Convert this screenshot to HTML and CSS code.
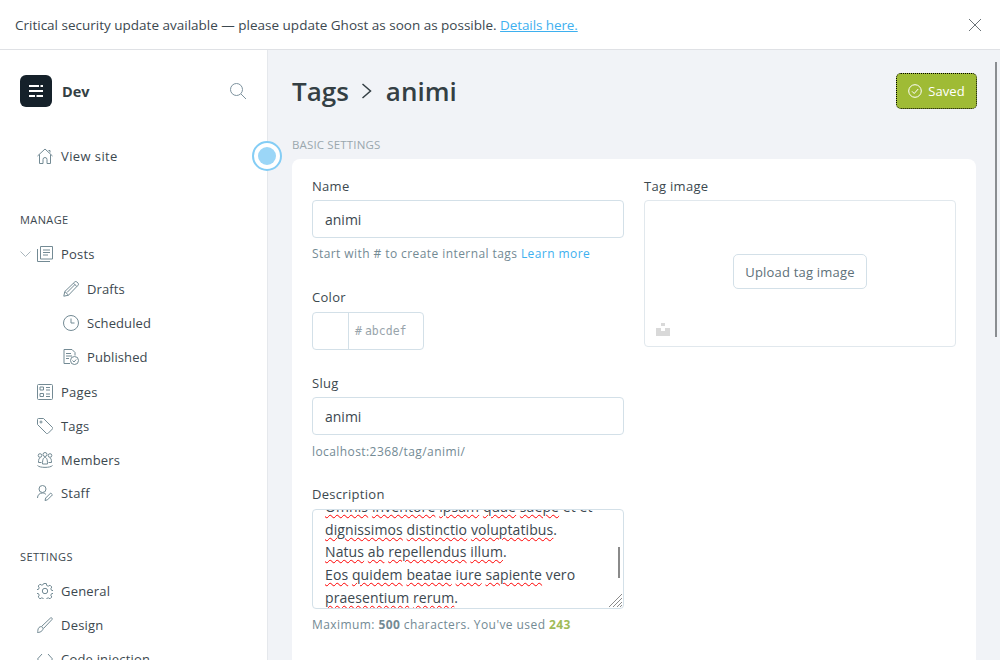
FILE: index.html
```html
<!DOCTYPE html>
<html lang="en">
<head>
<meta charset="UTF-8">
<meta name="viewport" content="width=device-width, initial-scale=1.0">
<title>Tags - animi - Dev</title>
<link rel="stylesheet" href="styles.css">
</head>
<body>

<!-- Update notice -->
<div class="notice">
  <p>Critical security update available — please update Ghost as soon as possible. <a href="#">Details here.</a></p>
  <svg class="notice-close" width="14" height="14" viewBox="0 0 14 14"><path d="M1 1l12 12M13 1L1 13"/></svg>
</div>

<div class="shell">

  <!-- Sidebar -->
  <nav class="sidebar">
    <div class="brand">
      <span class="brand-logo">
        <svg width="16" height="14" viewBox="0 0 16 14"><path d="M1 2h10M12.500 2H15M1 7h14M1 12h6M8.500 12H15"/></svg>
      </span>
      <span class="brand-name">Dev</span>
      <svg class="brand-search" width="18" height="18" viewBox="0 0 18 18"><circle cx="7.500" cy="7.500" r="6"/><path d="M12 12l5 5"/></svg>
    </div>

    <a class="nav-item view-site" href="#">
      <svg class="nav-icon" viewBox="0 0 16 16"><path d="M.5 8L8 1l7.500 7M2.500 6.500v9h3.500v-4a2 2 0 0 1 4 0v4h3.500v-9M11.500 2.500h1.500v2"/></svg>
      View site
    </a>

    <h2 class="nav-title">MANAGE</h2>
    <a class="nav-item nav-posts" href="#">
      <svg class="nav-caret" width="11" height="6" viewBox="0 0 11 6"><path d="M.5.500l5 5 5-5"/></svg>
      <svg class="nav-icon" viewBox="0 0 16 16"><path d="M3.500.500h12v12.500h-12zM.5 3v12.500h12.500M6 4h7M6 6.500h7M6 9h5"/></svg>
      Posts
    </a>
    <a class="nav-item nav-sub" href="#">
      <svg class="nav-icon" viewBox="0 0 16 16"><path d="M.8 15.200l1-4.700L11.800.9a1.500 1.500 0 0 1 2 0l1.300 1.300a1.500 1.500 0 0 1 0 2L5.500 14.200zM1.800 10.500l3.700 3.700M10.500 2.200l3.300 3.300M4 11.500l8-8"/></svg>
      Drafts
    </a>
    <a class="nav-item nav-sub" href="#">
      <svg class="nav-icon" viewBox="0 0 16 16"><circle cx="8" cy="8" r="7.500"/><path d="M8 3.500V8h3.500"/></svg>
      Scheduled
    </a>
    <a class="nav-item nav-sub" href="#">
      <svg class="nav-icon" viewBox="0 0 16 16"><path d="M7 14.500H1V.5h8l3 3v3M3 4.500h5M3 7h6M3 9.500h3"/><circle cx="11.500" cy="11.500" r="4"/><path d="M9.500 11.500l1.500 1.500 2.200-2.500"/></svg>
      Published
    </a>
    <a class="nav-item nav-pages" href="#">
      <svg class="nav-icon" viewBox="0 0 16 16"><rect x=".5" y=".5" width="15" height="15" rx="1"/><path d="M3 3h3.500v3H3zM3 9.500h3.500v3H3zM9 3.500h4M9 6h4M9 10h4M9 12.500h4"/></svg>
      Pages
    </a>
    <a class="nav-item" href="#">
      <svg class="nav-icon" viewBox="0 0 16 16"><path d="M.5 1.500a1 1 0 0 1 1-1h5l9 9a1 1 0 0 1 0 1.400l-4.600 4.600a1 1 0 0 1-1.400 0l-9-9z"/><circle cx="4" cy="4" r="1"/></svg>
      Tags
    </a>
    <a class="nav-item" href="#">
      <svg class="nav-icon" viewBox="0 0 16 16"><circle cx="8" cy="2.500" r="2"/><circle cx="3" cy="3.500" r="1.800"/><circle cx="13" cy="3.500" r="1.800"/><path d="M5.500 12c0-5 1-6.500 2.500-6.500s2.500 1.500 2.500 6.500zM4.500 10.500H1.500c0-3 .5-4.500 1.700-4.500M11.500 10.500h3c0-3-.5-4.500-1.700-4.500M.5 13.500c2 2.500 13 2.500 15 0"/></svg>
      Members
    </a>
    <a class="nav-item nav-staff" href="#">
      <svg class="nav-icon" viewBox="0 0 16 16"><circle cx="5.500" cy="4" r="3.500"/><path d="M.5 13c0-3 2-5 5-5 1.500 0 2.500.5 3.500 1.500M8 15.500l.7-2.500 5-5 1.800 1.800-5 5z"/></svg>
      Staff
    </a>

    <h2 class="nav-title nav-title-settings">SETTINGS</h2>
    <a class="nav-item" href="#">
      <svg class="nav-icon" viewBox="0 0 16 16"><circle cx="8" cy="8" r="2.700"/><path d="M6.700.5h2.600l.4 2 1.500.7 1.800-1 1.800 1.800-1 1.800.7 1.500 2 .4v2.600l-2 .4-.7 1.500 1 1.800-1.800 1.800-1.800-1-1.500.7-.4 2H6.700l-.4-2-1.500-.7-1.800 1-1.800-1.800 1-1.800-.7-1.500-2-.4V6.700l2-.4.7-1.500-1-1.800 1.800-1.800 1.800 1 1.500-.7z"/></svg>
      General
    </a>
    <a class="nav-item" href="#">
      <svg class="nav-icon" viewBox="0 0 16 16"><path d="M.5 15.500c.5-1 0-3.500 1.500-5s3.500-1 4 .5-1.500 4.500-5.500 4.500zM4.500 9.500l9-8.500c1-.8 2.300.5 1.500 1.500l-8.500 9"/></svg>
      Design
    </a>
    <a class="nav-item" href="#">
      <svg class="nav-icon" viewBox="0 0 16 16"><path d="M5 3L.5 8 5 13M11 3l4.500 5L11 13"/></svg>
      Code injection
    </a>
  </nav>

  <span class="pulse"><span class="pulse-dot"></span></span>

  <!-- Main -->
  <main class="content">
    <header class="page-head">
      <h1 class="crumbs">
        <span>Tags</span>
        <svg width="12" height="18" viewBox="0 0 12 18"><path d="M1.500 2l8 7-8 7"/></svg>
        <span>animi</span>
      </h1>
      <button class="btn-saved">
        <svg width="14" height="14" viewBox="0 0 14 14"><circle cx="7" cy="7" r="6.300"/><path d="M4 7.300l2.200 2.200L10.200 5"/></svg>
        Saved
      </button>
    </header>

    <h3 class="section-title">BASIC SETTINGS</h3>

    <section class="card">
      <div class="col">
        <div class="field">
          <label>Name</label>
          <div class="input">animi</div>
          <p class="help">Start with # to create internal tags <a href="#">Learn more</a></p>
        </div>
        <div class="field field-color">
          <label>Color</label>
          <div class="color-input">
            <span class="color-swatch"></span>
            <span class="color-value"><i>#</i>abcdef</span>
          </div>
        </div>
        <div class="field field-slug">
          <label>Slug</label>
          <div class="input">animi</div>
          <p class="help">localhost:2368/tag/animi/</p>
        </div>
        <div class="field field-desc">
          <label>Description</label>
          <div class="textarea">
            <div class="textarea-text">
              <u>Omnis</u> <u>inventore</u> <u>ipsam</u> <u>quae</u> <u>saepe</u> et et<br>
              <u>dignissimos</u> <u>distinctio</u> <u>voluptatibus</u>.<br>
              <u>Natus</u> <u>ab</u> <u>repellendus</u> <u>illum</u>.<br>
              <u>Eos</u> <u>quidem</u> <u>beatae</u> <u>iure</u> <u>sapiente</u> vero<br>
              <u>praesentium</u> <u>rerum</u>.
            </div>
            <span class="textarea-thumb"></span>
            <svg class="textarea-grip" width="14" height="14" viewBox="0 0 14 14"><path d="M1 14L14 1M5 14l9-9M9 14l5-5M12 14l2-2"/></svg>
          </div>
          <p class="help">Maximum: <b>500</b> characters. You've used <b class="count">243</b></p>
        </div>
      </div>

      <div class="col">
        <div class="field">
          <label>Tag image</label>
          <div class="image-box">
            <button class="btn-upload">Upload tag image</button>
            <svg class="image-broken" width="14" height="14" viewBox="0 0 14 14"><path d="M5 0h4v3H5zM0 5h5v3h4V5h5v8H0z"/></svg>
          </div>
        </div>
      </div>
    </section>
  </main>

  <span class="page-scroll"></span>
</div>

</body>
</html>
```

FILE: styles.css
```css
/* Global Styles */
* {
  box-sizing: border-box;
}

body {
  font-family: 'Open Sans', 'Noto Sans', sans-serif;
  font-size: 13px;
  color: #3c484f;
  background-color: #fff;
  margin: 0;
  height: 660px;
  overflow: hidden;
}

a {
  text-decoration: none;
}

/* Notice */
.notice {
  height: 50px;
  display: flex;
  align-items: center;
  justify-content: space-between;
  padding: 0 18px 0 15px;
  border-bottom: 1px solid #dfe1e5;
}

.notice p {
  margin: 0;
  font-size: 13.5px;
  color: #3c484f;
}

.notice a {
  color: #3eb0ef;
  letter-spacing: -0.1px;
  text-decoration: underline;
}

.notice-close {
  fill: none;
  stroke: #6b7378;
  stroke-width: 1;
}

/* Shell */
.shell {
  position: relative;
  display: flex;
  height: 610px;
  overflow: hidden;
}

/* Sidebar */
.sidebar {
  width: 268px;
  flex: none;
  padding: 25px 20px 0;
  border-right: 1px solid #e5e8ec;
}

.brand {
  display: flex;
  align-items: center;
  height: 32px;
  margin-bottom: 32px;
}

.brand-logo {
  width: 32px;
  height: 32px;
  border-radius: 6px;
  background-color: #15212a;
  display: flex;
  align-items: center;
  justify-content: center;
}

.brand-logo svg {
  fill: none;
  stroke: #fff;
  stroke-width: 2;
}

.brand-name {
  margin-left: 10px;
  font-size: 14.5px;
  font-weight: 700;
  color: #343f44;
}

.brand-search {
  margin-left: auto;
  fill: none;
  stroke: #7d929e;
  stroke-width: 1;
}

.nav-item {
  display: flex;
  align-items: center;
  height: 34px;
  padding-left: 17px;
  color: #3c484f;
  font-size: 13px;
  letter-spacing: 0.2px;
  position: relative;
}

.nav-icon {
  width: 16px;
  height: 16px;
  margin-right: 8px;
  flex: none;
  fill: none;
  stroke: #738a94;
  stroke-width: 1;
}

.nav-caret {
  position: absolute;
  left: 0;
  top: 14px;
  fill: none;
  stroke: #aab6bd;
  stroke-width: 1;
}

.view-site {
  height: 33px;
  letter-spacing: 0.4px;
}

.nav-posts {
  margin-bottom: 1px;
}

.nav-pages {
  margin-top: 1px;
}

.nav-staff {
  height: 33px;
  margin-top: -1px;
}

.nav-sub {
  padding-left: 43px;
  letter-spacing: 0.1px;
}

.nav-title {
  margin: 40px 0 9px;
  font-size: 11px;
  font-weight: 400;
  letter-spacing: 0.4px;
  line-height: 16px;
  color: #3c484f;
}

/* Pulse dot */
.pulse {
  position: absolute;
  left: 252px;
  top: 91px;
  width: 30px;
  height: 30px;
  border-radius: 50%;
  border: 2px solid #84cdf5;
  background-color: #fff;
  display: flex;
  align-items: center;
  justify-content: center;
}

.pulse-dot {
  width: 18px;
  height: 18px;
  border-radius: 50%;
  background-color: #9bd6f7;
}

/* Main */
.content {
  flex: 1;
  background-color: #f1f3f7;
  padding: 21px 24px 0;
}

.page-head {
  display: flex;
  align-items: center;
  justify-content: space-between;
  height: 40px;
}

.crumbs {
  margin: 0;
  display: flex;
  align-items: center;
  gap: 11px;
  font-size: 26px;
  font-weight: 600;
  color: #343f44;
}

.crumbs svg {
  margin: 0 2px 0 1px;
  fill: none;
  stroke: #343f44;
  stroke-width: 1.500;
}

.btn-saved {
  width: 81px;
  height: 36px;
  margin-right: -1px;
  display: flex;
  align-items: center;
  justify-content: center;
  gap: 6px;
  padding: 0;
  border: 1px dotted #000;
  border-radius: 5px;
  background-color: #9fbb35;
  color: #fff;
  font-family: inherit;
  font-size: 13px;
  letter-spacing: 0.1px;
}

.btn-saved svg {
  fill: none;
  stroke: #fff;
  stroke-width: 1;
}

.section-title {
  margin: 26px 0 6px;
  font-size: 11.5px;
  font-weight: 400;
  line-height: 16px;
  letter-spacing: 0.15px;
  color: #9aa7ae;
}

.card {
  display: flex;
  gap: 20px;
  height: 520px;
  padding: 18px 20px;
  border-radius: 8px 8px 0 0;
  background-color: #fff;
}

.col {
  width: 312px;
}

.field label {
  display: block;
  font-size: 13px;
  font-weight: 500;
  line-height: 18px;
  letter-spacing: 0.3px;
  margin-bottom: 5px;
  color: #3c484f;
}

.input {
  height: 38px;
  padding: 0 12px;
  display: flex;
  align-items: center;
  border: 1px solid #d3e0e8;
  border-radius: 4px;
  font-size: 14px;
  color: #3c484f;
}

.help {
  margin: 7px 0 0;
  font-size: 12px;
  line-height: 18px;
  letter-spacing: 0.42px;
  color: #738a94;
}

.help a {
  color: #3eb0ef;
}

.help b {
  font-weight: 700;
}

.help .count {
  color: #9fbb58;
}

.field-color {
  margin-top: 25px;
}

.field-color label {
  margin-bottom: 6px;
}

.color-input {
  display: flex;
  width: 112px;
  height: 38px;
  border: 1px solid #d3e0e8;
  border-radius: 4px;
}

.color-swatch {
  width: 36px;
  border-right: 1px solid #d3e0e8;
}

.color-value {
  padding-left: 6px;
  line-height: 36px;
  font-family: 'DejaVu Sans Mono', 'Liberation Mono', monospace;
  font-size: 11.5px;
  color: #98a4ab;
}

.color-value i {
  font-style: normal;
  margin-right: 3px;
}

.field-slug {
  margin-top: 24px;
}

.field-slug .help {
  margin-top: 8px;
}

.field-desc {
  margin-top: 24px;
}

.field-desc label {
  margin-bottom: 6px;
}

.textarea {
  position: relative;
  height: 100px;
  border: 1px solid #d3e0e8;
  border-radius: 4px;
  overflow: hidden;
}

.textarea-text {
  margin-top: -14px;
  padding: 0 12px;
  font-size: 14px;
  line-height: 22.700px;
  letter-spacing: 0.1px;
  color: #3c484f;
}

.textarea-text u {
  text-decoration: underline wavy #f00 1px;
  text-underline-offset: 2px;
}

.textarea-thumb {
  position: absolute;
  right: 3px;
  top: 37px;
  width: 2px;
  height: 31px;
  background-color: #8a8a8a;
}

.textarea-grip {
  position: absolute;
  right: 1px;
  bottom: 1px;
  fill: none;
  stroke: #8a8a8a;
  stroke-width: 1;
}

.image-box {
  position: relative;
  height: 147px;
  padding-bottom: 4px;
  border: 1px solid #e1e8ed;
  border-radius: 4px;
  display: flex;
  align-items: center;
  justify-content: center;
}

.btn-upload {
  width: 134px;
  height: 35px;
  padding: 0;
  border: 1px solid #d3e0e8;
  border-radius: 5px;
  background-color: #fff;
  color: #5d7079;
  font-family: inherit;
  font-size: 13px;
  letter-spacing: 0.2px;
}

.image-broken {
  position: absolute;
  left: 11px;
  bottom: 9px;
  fill: #d9d9d9;
}

/* Page scrollbar */
.page-scroll {
  position: absolute;
  right: 3px;
  top: 12px;
  width: 2px;
  height: 275px;
  background-color: #8a8d91;
}
```
